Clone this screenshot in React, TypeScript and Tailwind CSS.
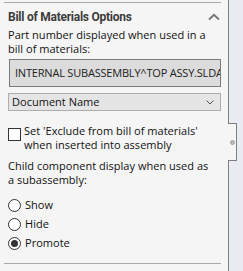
import React from 'react';

function Radio({ label, checked }: { label: string; checked?: boolean }) {
  return (
    <div className="flex items-center h-[19px]">
      <span className="w-[13px] h-[13px] rounded-full border border-[#333] bg-white flex items-center justify-center">
        {checked && <span className="w-[7px] h-[7px] rounded-full bg-[#333]" />}
      </span>
      <span className="ml-[4px]">{label}</span>
    </div>
  );
}

export default function App() {
  return (
    <div
      className="w-[243px] h-[271px] flex bg-[#e9ecf3] text-[11px] tracking-[0.02px] text-[#111]"
      style={{ fontFamily: '"Open Sans", "Noto Sans", sans-serif' }}
    >
      {/* panel */}
      <div className="w-[228px] h-full bg-[#f5f5f5] flex flex-col px-[4px]">
        <div className="mt-[2px] h-px bg-[#a8a8a8] mr-[3px]" />

        <div className="flex items-center justify-between pl-[4px] pr-[4px] h-[22px] mt-[3px]">
          <span
            className="font-bold text-[#3c3c3c] text-[12px] tracking-[-0.25px]"
            style={{ fontFamily: 'Roboto, "Liberation Sans", sans-serif' }}
          >
            Bill of Materials Options
          </span>
          <svg width="12" height="8" viewBox="0 0 12 8" fill="none">
            <path d="M1 6.5 L6 1.8 L11 6.5" stroke="#777" strokeWidth="2" />
          </svg>
        </div>

        <div className="pl-[4px] leading-[14px]">
          <div>Part number displayed when used in a</div>
          <div>bill of materials:</div>
        </div>

        <div className="mt-[3px] ml-[5px] mr-[3px] h-[28px] border border-[#7a7a7a] bg-[#dcdcdc] flex items-center pl-[5px] overflow-hidden whitespace-nowrap text-[#222] tracking-[-0.2px]">
          INTERNAL SUBASSEMBLY^TOP ASSY.SLDASM
        </div>

        <div className="mt-[6px] ml-[4px] mr-[3px] h-[18px] border border-[#adadad] bg-[#e5e5e5] flex items-center justify-between pl-[3px] pr-[6px]">
          <span>Document Name</span>
          <svg width="8" height="5" viewBox="0 0 8 5" fill="none">
            <path d="M0.5 0.5 L4 4 L7.5 0.5" stroke="#555" strokeWidth="1" />
          </svg>
        </div>

        <div className="mt-[13px] pl-[4px] flex items-start leading-[14px]">
          <span className="mt-[4px] w-[13px] h-[13px] border border-[#333] bg-white shrink-0" />
          <div className="ml-[3px]">
            <div>Set 'Exclude from bill of materials'</div>
            <div>when inserted into assembly</div>
          </div>
        </div>

        <div className="mt-[7px] pl-[4px] leading-[14px]">
          <div>Child component display when used as</div>
          <div>a subassembly:</div>
        </div>

        <div className="mt-[9px] pl-[4px] flex flex-col">
          <Radio label="Show" />
          <Radio label="Hide" />
          <Radio label="Promote" checked />
        </div>

        <div className="mt-[10px] h-px bg-[#a8a8a8] mr-[3px]" />
      </div>

      {/* splitter */}
      <div className="relative w-[15px] h-full border-l border-[#7f7f7f]">
        <div className="absolute left-[-1px] top-[123px] w-[9px] h-[38px] bg-[#f5f5f5] border-y border-r border-[#7f7f7f] flex items-center justify-center">
          <span className="w-[5px] h-[5px] rounded-full bg-[#bdbdbd] border border-[#a0a0a0]" />
        </div>
      </div>
    </div>
  );
}
